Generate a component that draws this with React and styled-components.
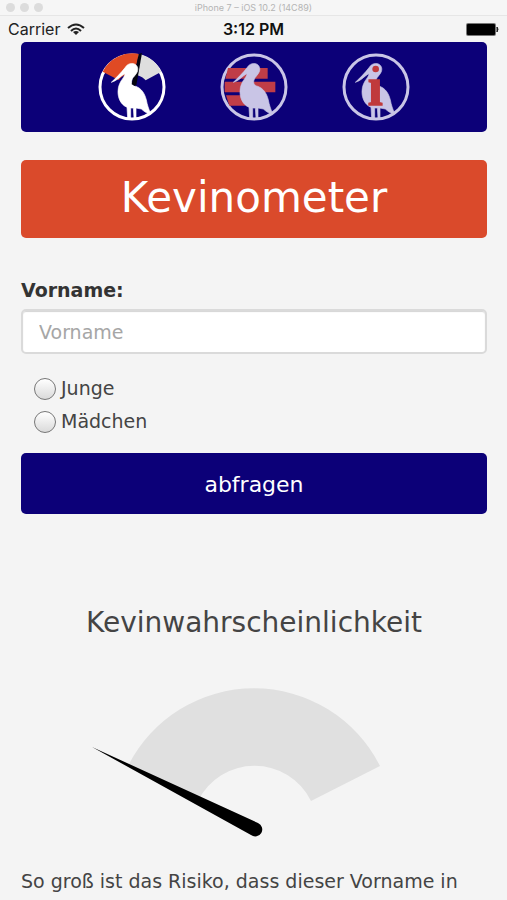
import { createGlobalStyle, styled } from "styled-components";

const GlobalStyle = createGlobalStyle`
  * {
    box-sizing: border-box;
  }

  body {
    margin: 0;
    background: #f4f4f4;
    color: #444;
    font-family: "DejaVu Sans", Verdana, sans-serif;
    font-size: 19px;
    line-height: 24px;
  }
`;

const TitleBar = styled.div`
  display: grid;
  grid-template-columns: 1fr auto 1fr;
  align-items: center;
  height: 16px;
  padding: 0 6px;
  background: #f6f6f6;
  border-bottom: 1px solid #e6e6e6;
  color: #b4b4b4;
  font-family: Inter, "Liberation Sans", sans-serif;
  font-size: 9px;
  line-height: 12px;
`;

const Lights = styled.div`
  display: flex;
  gap: 5px;
`;

const Light = styled.span`
  width: 9px;
  height: 9px;
  border-radius: 50%;
  background: #dcdcdc;
`;

const StatusBar = styled.div`
  display: grid;
  grid-template-columns: 1fr auto 1fr;
  align-items: center;
  height: 26px;
  padding: 0 8px;
  color: #222;
  font-family: Inter, "Liberation Sans", sans-serif;
  font-size: 16px;
  line-height: 20px;
`;

const Carrier = styled.div`
  display: flex;
  align-items: center;
  gap: 7px;
`;

const Clock = styled.span`
  color: #111;
  font-weight: 600;
`;

const Battery = styled.svg`
  justify-self: end;
`;

const Main = styled.main`
  padding: 0 20px 0 21px;
`;

const Nav = styled.nav`
  display: flex;
  justify-content: center;
  gap: 54px;
  padding: 11px;
  border-radius: 5px;
  background: #0c0078;
`;

const NavLink = styled.a`
  display: block;
  height: 68px;
`;

const Title = styled.h1`
  margin: 28px 0 40px;
  padding: 13px 0 15px;
  border-radius: 5px;
  background: #da4a2b;
  color: #fff;
  font-size: 42px;
  font-weight: 400;
  line-height: 50px;
  text-align: center;
`;

const Label = styled.label`
  display: block;
  margin-bottom: 7px;
  color: #333;
  font-weight: 700;
`;

const TextInput = styled.input`
  display: block;
  width: 100%;
  height: 45px;
  padding: 0 16px;
  border: 2px solid #dadada;
  border-radius: 5px;
  background: #fff;
  box-shadow: inset 0 1px 1px #d4d4d4;
  color: #333;
  font: inherit;

  &::placeholder {
    color: #a6a6a6;
    opacity: 1;
  }
`;

const Options = styled.div`
  display: flex;
  flex-direction: column;
  gap: 9px;
  margin: 22px 0 20px;
  padding-left: 13px;
`;

const Option = styled.label`
  display: flex;
  align-items: center;
  gap: 5px;
`;

const Radio = styled.input`
  appearance: none;
  width: 22px;
  height: 22px;
  margin: 2px 0 0;
  border: 1px solid #777;
  border-radius: 50%;
  background: linear-gradient(#fff, #dadada);

  &:checked {
    background: radial-gradient(#333 30%, #eee 34%);
  }
`;

const Submit = styled.button`
  display: block;
  width: 100%;
  padding: 17px 16px 15px;
  border: 0;
  border-radius: 5px;
  background: #0c0078;
  color: #fff;
  font-family: inherit;
  font-size: 22px;
  line-height: 29px;
`;

const Result = styled.section`
  margin-top: 91px;
`;

const ResultTitle = styled.h2`
  margin: 0 0 47px;
  color: #444;
  font-size: 28px;
  font-weight: 400;
  line-height: 36px;
  text-align: center;
`;

const Gauge = styled.svg`
  display: block;
  margin: 0 auto;
`;

const Text = styled.p`
  margin: 32px 0 0;
`;

const Bird = ({ fill }) => (
  <path
    fill={fill}
    stroke={fill}
    strokeWidth="2"
    strokeLinejoin="round"
    d="M60 109 C72 98 90 80 102 64 C108 54 118 51 127 53 C137 56 142 66 138 77
       C134 87 125 92 122 102 C119 112 123 118 133 121 C150 127 160 142 165 162
       C168 177 172 190 178 202 C170 204 160 198 150 189 L134 186 L134 216
       L128 216 L126 186 L118 186 L118 216 L109 216 L107 184
       C88 175 80 157 80 137 C80 118 88 106 96 95 C99 90 101 86 100 83
       C88 90 80 100 70 105 Z"
  />
);

const BirdIcon = ({ color, children }) => (
  <svg width="68" height="68" viewBox="20 21 204 204" aria-hidden="true">
    <circle cx="122" cy="123" r="96" fill="none" stroke={color} strokeWidth="9" />
    {children}
  </svg>
);

const GaugeIcon = () => (
  <BirdIcon color="#fff">
    <path
      d="M34 77 A101 101 0 0 1 143 24 L128 88 C112 82 94 86 82 102 Z"
      fill="#e04a24"
    />
    <path
      d="M148 25 A101 101 0 0 1 210 77 L163 103 C157 96 149 91 139 88 Z"
      fill="#dedede"
    />
    <path d="M152 21 L135 118 L122 118 L142 24 Z" fill="#050510" />
    <Bird fill="#fff" />
    <path d="M137 88 L132 121 L121 115 L125 97 Z" fill="#050510" />
  </BirdIcon>
);

const ListIcon = () => (
  <BirdIcon color="#c9c5e6">
    <path
      d="M44 66 H163 V98 H36 Z M34 107 H186 V139 H34 Z M38 148 H96 V179 H48 Z"
      fill="#c03d47"
    />
    <Bird fill="#c9c5e6" />
  </BirdIcon>
);

const InfoIcon = () => (
  <BirdIcon color="#c9c5e6">
    <Bird fill="#c9c5e6" />
    <circle cx="121" cy="69" r="10" fill="#c03a3c" />
    <text
      x="120"
      y="178"
      fill="#c03a3c"
      stroke="#c03a3c"
      strokeWidth="4"
      fontFamily="Liberation Serif, serif"
      fontSize="162"
      fontWeight="700"
      textAnchor="middle"
    >
      ı
    </text>
  </BirdIcon>
);

const App = () => {
  return (
    <>
      <GlobalStyle />
      <TitleBar>
        <Lights>
          <Light />
          <Light />
          <Light />
        </Lights>
        <span>iPhone 7 – iOS 10.2 (14C89)</span>
      </TitleBar>
      <StatusBar>
        <Carrier>
          Carrier
          <svg width="18" height="13" viewBox="0 0 18 13" aria-hidden="true">
            <g fill="none" stroke="#222" strokeWidth="2">
              <path d="M1 5 Q9 -2 17 5" />
              <path d="M4 8 Q9 3 14 8" />
            </g>
            <path d="M6 9 Q9 7 12 9 L9 12 Z" fill="#222" />
          </svg>
        </Carrier>
        <Clock>3:12 PM</Clock>
        <Battery width="33" height="13" viewBox="0 0 33 13" aria-hidden="true">
          <rect width="30" height="13" rx="2" fill="#777" />
          <rect x="1" y="1" width="28" height="11" rx="1" fill="#000" />
          <path d="M31 4 Q33 6 31 9 Z" fill="#222" stroke="#222" />
        </Battery>
      </StatusBar>
      <Main>
        <Nav>
          <NavLink href="#kevinometer" aria-label="Kevinometer">
            <GaugeIcon />
          </NavLink>
          <NavLink href="#liste" aria-label="Liste">
            <ListIcon />
          </NavLink>
          <NavLink href="#info" aria-label="Info">
            <InfoIcon />
          </NavLink>
        </Nav>
        <Title>Kevinometer</Title>
        <form onSubmit={(e) => e.preventDefault()}>
          <Label htmlFor="vorname">Vorname:</Label>
          <TextInput id="vorname" type="text" placeholder="Vorname" />
          <Options>
            <Option>
              <Radio type="radio" name="geschlecht" value="junge" />
              Junge
            </Option>
            <Option>
              <Radio type="radio" name="geschlecht" value="maedchen" />
              Mädchen
            </Option>
          </Options>
          <Submit type="submit">abfragen</Submit>
        </form>
        <Result>
          <ResultTitle>Kevinwahrscheinlichkeit</ResultTitle>
          <Gauge width="324" height="149" viewBox="0 0 324 149" aria-hidden="true">
            <path
              d="M36 78 A141 141 0 0 1 288 78 L219 113 A63 63 0 0 0 106 113 Z"
              fill="#e0e0e0"
            />
            <path d="M0 59 L166 135 A7 7 0 1 1 159 147 Z" fill="#000" />
          </Gauge>
          <Text>So groß ist das Risiko, dass dieser Vorname in</Text>
        </Result>
      </Main>
    </>
  );
};

export default App;
